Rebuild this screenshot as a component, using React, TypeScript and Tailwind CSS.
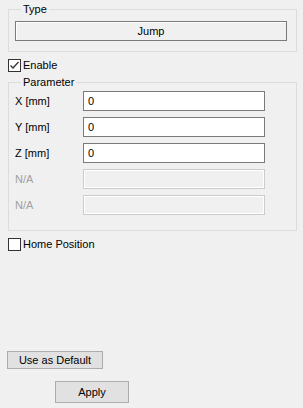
import React from 'react'

const font = { fontFamily: '"Liberation Sans", Arial, sans-serif' }

function CheckBox({ checked, label }: { checked?: boolean; label: string }) {
  return (
    <div className="flex items-center h-[14px]">
      <div className="w-[13px] h-[13px] border border-[#333333] bg-white flex items-center justify-center">
        {checked && (
          <svg width="11" height="11" viewBox="0 0 11 11">
            <path d="M1.5 5.5 L4 8 L9.5 2" fill="none" stroke="#333333" strokeWidth="1.3" />
          </svg>
        )}
      </div>
      <span className="ml-[2px] text-black">{label}</span>
    </div>
  )
}

function ParamRow({ label, value, disabled }: { label: string; value?: string; disabled?: boolean }) {
  return (
    <div className="flex items-center h-[20px]">
      <span className={disabled ? 'w-[68px] text-[#a0a0a0]' : 'w-[68px] text-black'}>{label}</span>
      {disabled ? (
        <div className="w-[182px] h-[20px] border border-[#cccccc] bg-[#f0f0f0] shadow-[inset_1px_1px_0_#ffffff,inset_-1px_-1px_0_#ffffff]" />
      ) : (
        <div className="w-[182px] h-[20px] border border-[#7a7a7a] bg-white flex items-center pl-[4px] text-black">
          {value}
        </div>
      )}
    </div>
  )
}

export default function App() {
  return (
    <div className="w-[303px] h-[408px] bg-[#f0f0f0] text-[11px] leading-[14px] flex flex-col pt-[2px]" style={font}>
      <fieldset className="ml-[8px] w-[289px] border border-[#dcdcdc] pl-[6px] pr-[9px] pt-[5px] pb-[10px]">
        <legend className="ml-[6px] px-[2px] text-black">Type</legend>
        <div className="h-[20px] border border-[#7a7a7a] bg-[#f0f0f0] shadow-[inset_1px_1px_0_#ffffff] flex items-center justify-center text-black">
          Jump
        </div>
      </fieldset>

      <div className="ml-[8px] mt-[6px]">
        <CheckBox checked label="Enable" />
      </div>

      <fieldset className="ml-[8px] mt-[3px] w-[289px] border border-[#dcdcdc] pl-[6px] pt-[2px] pb-[15px] flex flex-col gap-[6px]">
        <legend className="ml-[6px] px-[2px] text-black">Parameter</legend>
        <div className="flex flex-col gap-[6px]">
          <ParamRow label="X [mm]" value="0" />
          <ParamRow label="Y [mm]" value="0" />
          <ParamRow label="Z [mm]" value="0" />
          <ParamRow label="N/A" disabled />
          <ParamRow label="N/A" disabled />
        </div>
      </fieldset>

      <div className="ml-[8px] mt-[6px]">
        <CheckBox label="Home Position" />
      </div>

      <button className="ml-[7px] mt-[100px] w-[96px] h-[18px] border border-[#adadad] bg-[#e1e1e1] text-black leading-[16px]">
        Use as Default
      </button>
      <button className="ml-[55px] mt-[12px] w-[74px] h-[22px] border border-[#adadad] bg-[#e1e1e1] text-black">
        Apply
      </button>
    </div>
  )
}
